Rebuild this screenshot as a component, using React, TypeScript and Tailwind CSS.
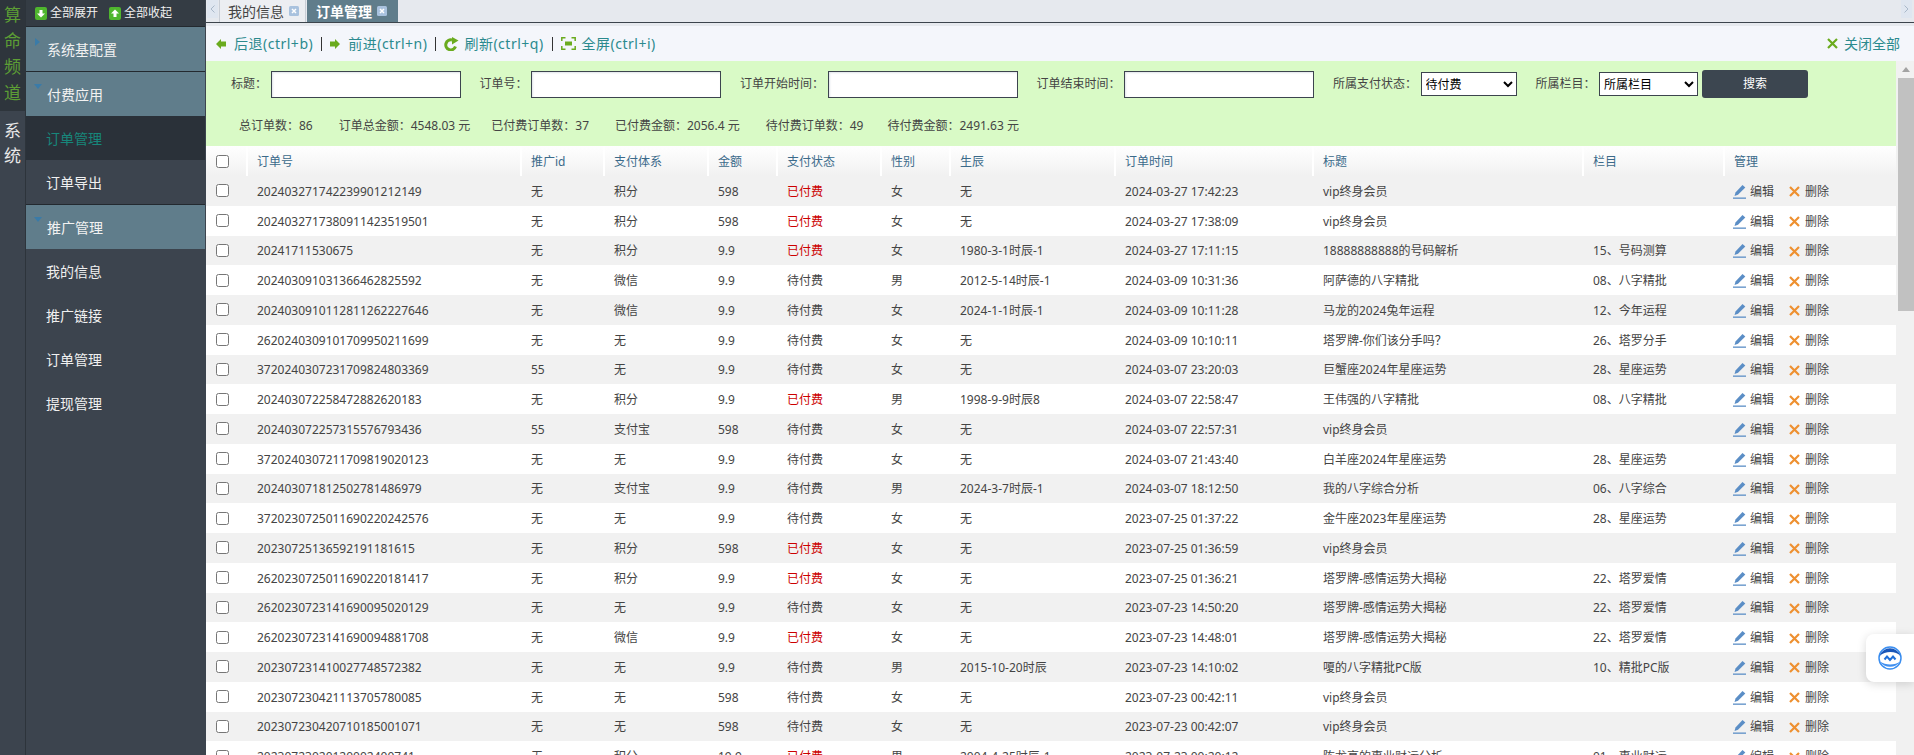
import React from 'react';

type Order = [string, string, string, string, string, string, string, string, string, string];

const orders: Order[] = [
  ['202403271742239901212149', '无', '积分', '598', '已付费', '女', '无', '2024-03-27 17:42:23', 'vip终身会员', ''],
  ['2024032717380911423519501', '无', '积分', '598', '已付费', '女', '无', '2024-03-27 17:38:09', 'vip终身会员', ''],
  ['20241711530675', '无', '积分', '9.9', '已付费', '女', '1980-3-1时辰-1', '2024-03-27 17:11:15', '18888888888的号码解析', '15、号码测算'],
  ['202403091031366462825592', '无', '微信', '9.9', '待付费', '男', '2012-5-14时辰-1', '2024-03-09 10:31:36', '阿萨德的八字精批', '08、八字精批'],
  ['2024030910112811262227646', '无', '微信', '9.9', '待付费', '女', '2024-1-1时辰-1', '2024-03-09 10:11:28', '马龙的2024兔年运程', '12、今年运程'],
  ['2620240309101709950211699', '无', '无', '9.9', '待付费', '女', '无', '2024-03-09 10:10:11', '塔罗牌-你们该分手吗？', '26、塔罗分手'],
  ['3720240307231709824803369', '55', '无', '9.9', '待付费', '女', '无', '2024-03-07 23:20:03', '巨蟹座2024年星座运势', '28、星座运势'],
  ['202403072258472882620183', '无', '积分', '9.9', '已付费', '男', '1998-9-9时辰8', '2024-03-07 22:58:47', '王伟强的八字精批', '08、八字精批'],
  ['202403072257315576793436', '55', '支付宝', '598', '待付费', '女', '无', '2024-03-07 22:57:31', 'vip终身会员', ''],
  ['3720240307211709819020123', '无', '无', '9.9', '待付费', '女', '无', '2024-03-07 21:43:40', '白羊座2024年星座运势', '28、星座运势'],
  ['202403071812502781486979', '无', '支付宝', '9.9', '待付费', '男', '2024-3-7时辰-1', '2024-03-07 18:12:50', '我的八字综合分析', '06、八字综合'],
  ['3720230725011690220242576', '无', '无', '9.9', '待付费', '女', '无', '2023-07-25 01:37:22', '金牛座2023年星座运势', '28、星座运势'],
  ['20230725136592191181615', '无', '积分', '598', '已付费', '女', '无', '2023-07-25 01:36:59', 'vip终身会员', ''],
  ['2620230725011690220181417', '无', '积分', '9.9', '已付费', '女', '无', '2023-07-25 01:36:21', '塔罗牌-感情运势大揭秘', '22、塔罗爱情'],
  ['2620230723141690095020129', '无', '无', '9.9', '待付费', '女', '无', '2023-07-23 14:50:20', '塔罗牌-感情运势大揭秘', '22、塔罗爱情'],
  ['2620230723141690094881708', '无', '微信', '9.9', '已付费', '女', '无', '2023-07-23 14:48:01', '塔罗牌-感情运势大揭秘', '22、塔罗爱情'],
  ['202307231410027748572382', '无', '无', '9.9', '待付费', '男', '2015-10-20时辰', '2023-07-23 14:10:02', '嗄的八字精批PC版', '10、精批PC版'],
  ['202307230421113705780085', '无', '无', '598', '待付费', '女', '无', '2023-07-23 00:42:11', 'vip终身会员', ''],
  ['202307230420710185001071', '无', '无', '598', '待付费', '女', '无', '2023-07-23 00:42:07', 'vip终身会员', ''],
  ['20230723020120002400741', '无', '积分', '19.9', '已付费', '男', '2004-4-25时辰-1', '2023-07-23 00:20:12', '陈龙亮的事业财运分析', '01、事业财运'],
];

const columns = [
  ['订单号', 'w-[274px]'],
  ['推广id', 'w-[83px]'],
  ['支付体系', 'w-[104px]'],
  ['金额', 'w-[69px]'],
  ['支付状态', 'w-[104px]'],
  ['性别', 'w-[69px]'],
  ['生辰', 'w-[165px]'],
  ['订单时间', 'w-[198px]'],
  ['标题', 'w-[270px]'],
  ['栏目', 'w-[141px]'],
];

function Triangle({ open }: { open?: boolean }) {
  return open ? (
    <svg width="8" height="5" viewBox="0 0 8 5" className="absolute left-[8px] top-[12px]">
      <path d="M0 0h8L4 5z" fill="#3a7ba8" />
    </svg>
  ) : (
    <svg width="5" height="8" viewBox="0 0 5 8" className="absolute left-[9px] top-[11px]">
      <path d="M0 0l5 4-5 4z" fill="#3a7ba8" />
    </svg>
  );
}

function GroupRow({ label, open }: { label: string; open?: boolean }) {
  return (
    <div className="relative h-[44px] bg-[#607d8b] pl-[21px] text-[14px] leading-[46px] text-[#f2f2f2]">
      <Triangle open={open} />
      {label}
    </div>
  );
}

function ChildRow({ label, active }: { label: string; active?: boolean }) {
  return (
    <div className={`h-[44px] pl-[20px] text-[14px] leading-[46px] ${active ? 'bg-[#2a3139] text-[#17877b]' : 'text-[#f0f0f0]'}`}>
      {label}
    </div>
  );
}

function Sidebar() {
  return (
    <div className="flex w-[206px] shrink-0 bg-[#3c444e]">
      <div className="flex w-[26px] shrink-0 flex-col items-center border-r border-[#2d343b] text-[17px]">
        <div className="flex h-[111px] w-full flex-col items-center bg-[#2e353c] pt-[2px] leading-[26px] text-[#5d9e35]">
          <span>算</span>
          <span>命</span>
          <span>频</span>
          <span>道</span>
        </div>
        <div className="flex flex-col items-center pt-[7px] leading-[25px] text-[#e8e8e8]">
          <span>系</span>
          <span>统</span>
        </div>
      </div>
      <div className="w-[179px]">
        <div className="flex h-[27px] items-center gap-[11px] border-b border-[#23292f] bg-[#343c44] pl-[9px] text-[12px] text-[#f0f0f0]">
          <span className="flex items-center gap-[3px]">
            <svg width="12" height="13" viewBox="0 0 12 13">
              <rect width="12" height="13" rx="2" fill="#4fb62e" />
              <path d="M4.500 3h3v3.500H10l-4 4-4-4h2.500z" fill="#fff" />
            </svg>
            全部展开
          </span>
          <span className="flex items-center gap-[3px]">
            <svg width="12" height="13" viewBox="0 0 12 13">
              <rect width="12" height="13" rx="2" fill="#4fb62e" />
              <path d="M4.500 10h3V6.500H10l-4-4-4 4h2.500z" fill="#fff" />
            </svg>
            全部收起
          </span>
        </div>
        <div className="border-b border-[#23292f]">
          <GroupRow label="系统基配置" />
        </div>
        <GroupRow label="付费应用" open />
        <ChildRow label="订单管理" active />
        <div className="border-b border-[#23292f]">
          <ChildRow label="订单导出" />
        </div>
        <GroupRow label="推广管理" open />
        <ChildRow label="我的信息" />
        <ChildRow label="推广链接" />
        <ChildRow label="订单管理" />
        <ChildRow label="提现管理" />
      </div>
    </div>
  );
}

function TabClose() {
  return (
    <svg width="10" height="10" viewBox="0 0 10 10" className="ml-[5px]">
      <rect width="10" height="10" rx="1.500" fill="#a9c2de" />
      <path d="M3 3l4 4M7 3l-4 4" stroke="#fff" strokeWidth="1.500" />
    </svg>
  );
}

function Tabs() {
  return (
    <div className="flex h-[23px] items-stretch justify-between border-b border-[#3c444c] bg-[#e6e9ee] pl-[1px] pr-[2px]">
      <div className="flex">
        <div className="mb-[4px] flex w-[11px] items-center justify-center bg-[#dfe6f0]">
          <svg width="5" height="8" viewBox="0 0 5 8">
            <path d="M4.500.5L1 4l3.500 3.500" stroke="#a9b8c9" fill="none" />
          </svg>
        </div>
        <div className="ml-[1px] flex w-[87px] items-center border-x border-[#c9ced6] bg-[#eceef2] pl-[8px] text-[14px] text-[#444]">
          我的信息
          <TabClose />
        </div>
        <div className="ml-[1px] flex w-[91px] items-center bg-[#607d8b] pl-[9px] text-[14px] font-bold text-white">
          订单管理
          <TabClose />
        </div>
      </div>
      <div className="mb-[4px] flex w-[11px] items-center justify-center bg-[#dfe6f0]">
        <svg width="5" height="8" viewBox="0 0 5 8">
          <path d="M.5.5L4 4 .5 7.500" stroke="#a9b8c9" fill="none" />
        </svg>
      </div>
    </div>
  );
}

const Sep = () => <span className="h-[14px] w-px bg-[#333]" />;

function Toolbar() {
  return (
    <div className="border-t-[3px] border-[#e6e9ee] bg-[#f4f6fb]">
      <div className="flex h-[35px] items-center justify-between pl-[10px] pr-[14px] text-[14px] text-[#2b8a8e]">
        <div className="flex items-center gap-[8px] tracking-[0.5px]">
          <span className="flex items-center gap-[8px]">
            <svg width="10" height="10" viewBox="0 0 10 10">
              <path d="M0 5l5-5v2.500h5v5H5V10z" fill="#6aab1e" />
            </svg>
            后退(ctrl+b)
          </span>
          <Sep />
          <span className="flex items-center gap-[8px]">
            <svg width="10" height="10" viewBox="0 0 10 10">
              <path d="M10 5L5 0v2.500H0v5h5V10z" fill="#6aab1e" />
            </svg>
            前进(ctrl+n)
          </span>
          <Sep />
          <span className="flex items-center gap-[5px]">
            <svg width="15" height="14" viewBox="0 0 15 14">
              <path d="M11.500 9.500A5 5 0 1 1 8 3" stroke="#6aab1e" strokeWidth="3" fill="none" />
              <path d="M8 0l6.500 3.500L8 7.500z" fill="#6aab1e" />
            </svg>
            刷新(ctrl+q)
          </span>
          <Sep />
          <span className="flex items-center gap-[6px]">
            <svg width="15" height="13" viewBox="0 0 15 13" fill="none" stroke="#6aab1e" strokeWidth="1.500">
              <path d="M.8 4V.8H4.500M10.500.8h3.700V4M14.200 9v3.200h-3.700M4.500 12.200H.8V9" />
              <rect x="4" y="4.500" width="7" height="4" fill="#6aab1e" stroke="none" />
            </svg>
            全屏(ctrl+i)
          </span>
        </div>
        <span className="flex items-center gap-[6px]">
          <svg width="11" height="11" viewBox="0 0 11 11">
            <path d="M1 1l9 9M10 1l-9 9" stroke="#6aab1e" strokeWidth="2.200" />
          </svg>
          关闭全部
        </span>
      </div>
    </div>
  );
}

function Field({ label, children }: { label: string; children: React.ReactNode }) {
  return (
    <label className="flex items-center gap-[3.5px]">
      <span className="whitespace-nowrap">{label}</span>
      {children}
    </label>
  );
}

function TextInput() {
  return <input type="text" className="h-[27px] w-[190px] border border-[#3c444e] bg-white shadow-[inset_1px_1px_2px_#e0e4ea]" />;
}

function SearchPanel() {
  return (
    <div className="h-[85px] bg-[#d9fac6] text-[12px] text-[#444]">
      <div className="flex items-center gap-[19px] pl-[25px] pt-[9px]">
        <Field label="标题：">
          <TextInput />
        </Field>
        <Field label="订单号：">
          <TextInput />
        </Field>
        <Field label="订单开始时间：">
          <TextInput />
        </Field>
        <Field label="订单结束时间：">
          <TextInput />
        </Field>
        <Field label="所属支付状态：">
          <select className="h-[24px] w-[96px] border border-[#3c444e] bg-white text-[12px] text-black">
            <option>待付费</option>
          </select>
        </Field>
        <div className="flex items-center gap-[4px]">
          <Field label="所属栏目：">
            <select className="h-[24px] w-[99px] border border-[#3c444e] bg-white text-[12px] text-black">
              <option>所属栏目</option>
            </select>
          </Field>
          <button className="h-[28px] w-[106px] rounded-[3px] bg-[#3c4650] text-[12px] text-white">搜索</button>
        </div>
      </div>
      <div className="mt-[18px] flex gap-[26px] pl-[33px] leading-[20px]">
        <span>总订单数：86</span>
        <span>订单总金额：4548.03 元</span>
        <span className="-ml-[5px]">已付费订单数：37</span>
        <span>已付费金额：2056.4 元</span>
        <span>待付费订单数：49</span>
        <span className="-ml-[2px]">待付费金额：2491.63 元</span>
      </div>
    </div>
  );
}

function Actions() {
  return (
    <span className="flex items-center text-[#444]">
      <svg width="13" height="14" viewBox="0 0 13 14" className="mr-[4px]">
        <path d="M9.500 0l2.800 2.400L5 9.800l-3.500 1.200L2.500 7.500z" fill="#5b8ec6" />
        <rect y="12.500" width="13" height="1.300" fill="#5b8ec6" />
      </svg>
      编辑
      <svg width="11" height="11" viewBox="0 0 11 11" className="ml-[15px] mr-[5px]">
        <path d="M1 1l9 9M10 1l-9 9" stroke="#ee9030" strokeWidth="2.200" />
      </svg>
      删除
    </span>
  );
}

function OrderTable() {
  return (
    <table className="w-[1690px] table-fixed border-collapse bg-white text-left text-[12px] text-[#444]">
      <thead>
        <tr className="h-[30px] bg-gradient-to-b from-white to-[#f1f1f1] text-[#3b6a8a]">
          <th className="w-[41px] border-r-2 border-white pl-[10px] font-normal">
            <input type="checkbox" className="block" />
          </th>
          {columns.map(([name, width]) => (
            <th key={name} className={`${width} border-r-2 border-white pl-[9px] pt-[1px] font-normal`}>
              {name}
            </th>
          ))}
          <th className="pl-[9px] pt-[1px] font-normal">管理</th>
        </tr>
      </thead>
      <tbody>
        {orders.map((o, i) => (
          <tr key={o[0]} className={`h-[29.750px] ${i % 2 === 0 ? 'bg-[#f1f1f1]' : 'bg-white'}`}>
            <td className="pl-[10px]">
              <input type="checkbox" className="block" />
            </td>
            {o.map((cell, c) => (
              <td key={c} className={`overflow-hidden whitespace-nowrap pl-[10px] pt-[2px] ${c === 4 && cell === '已付费' ? 'text-[#cc0000]' : ''}`}>
                {cell}
              </td>
            ))}
            <td className="pl-[9px] pt-[2px]">
              <Actions />
            </td>
          </tr>
        ))}
      </tbody>
    </table>
  );
}

function ScrollBar() {
  return (
    <div className="ml-[2px] flex w-[16px] shrink-0 flex-col bg-[#f1f1f1]">
      <div className="flex h-[17px] items-center justify-center">
        <svg width="8" height="5" viewBox="0 0 8 5">
          <path d="M0 5l4-5 4 5z" fill="#a3a3a3" />
        </svg>
      </div>
      <div className="h-[233px] bg-[#c1c1c1]" />
    </div>
  );
}

export default function App() {
  return (
    <div className="relative flex h-screen w-screen overflow-hidden bg-[#f1f1f1] font-['Noto_Sans','Noto_Sans_CJK_SC',sans-serif]">
      <Sidebar />
      <div className="flex min-w-0 flex-1 flex-col">
        <Tabs />
        <Toolbar />
        <div className="flex min-h-0 flex-1">
          <div className="w-[1690px] shrink-0">
            <SearchPanel />
            <OrderTable />
          </div>
          <ScrollBar />
        </div>
      </div>
      <div className="absolute right-0 top-[634px] flex h-[48px] w-[48px] items-center justify-center rounded-l-lg bg-white shadow-[0_2px_10px_rgba(0,0,0,0.15)]">
        <svg width="24" height="24" viewBox="0 0 24 24" fill="none">
          <circle cx="12" cy="12" r="11" stroke="#3a8ef0" strokeWidth="1.500" />
          <path d="M1.500 10A11 11 0 0 1 22.500 10C18 4.500 7 4.500 1.500 10z" fill="#1a56b8" />
          <path d="M2 15.500C6 22.500 18 22.500 22 15.500C18 19 8 20 2 15.500z" fill="#3f8ff0" />
          <path d="M6.500 13.500l2.500-3 3 3.500 3-3.500 2.500 3" stroke="#1f6fd8" strokeWidth="2" />
        </svg>
      </div>
    </div>
  );
}
